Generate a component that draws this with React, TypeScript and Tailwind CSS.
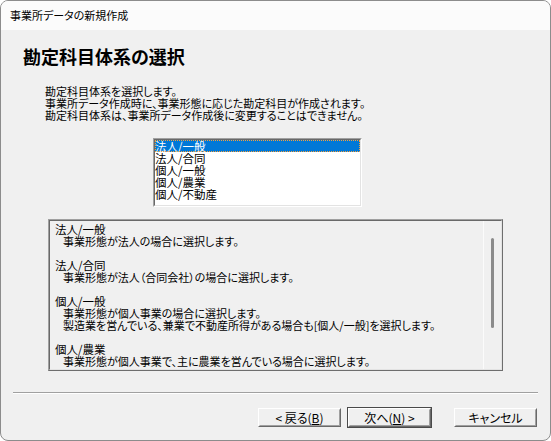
const items = ['法人/一般', '法人/合同', '個人/一般', '個人/農業', '個人/不動産'];

const help: { title: string; lines: string[] }[] = [
  { title: '法人/一般', lines: ['事業形態が法人の場合に選択します。'] },
  { title: '法人/合同', lines: ['事業形態が法人（合同会社）の場合に選択します。'] },
  {
    title: '個人/一般',
    lines: [
      '事業形態が個人事業の場合に選択します。',
      '製造業を営んでいる、兼業で不動産所得がある場合も[個人/一般]を選択します。',
    ],
  },
  { title: '個人/農業', lines: ['事業形態が個人事業で、主に農業を営んでいる場合に選択します。'] },
  { title: '個人/不動産', lines: ['事業形態が個人事業で、主に不動産賃貸業を営んでいる場合に選択します。'] },
];

const Button = ({ children, primary }: { children: React.ReactNode; primary?: boolean }) => (
  <div className={primary ? 'border border-[#4a4a4a]' : 'border border-transparent'}>
    <div className="border border-white border-r-[#696969] border-b-[#696969]">
      <div className="flex h-[17px] w-[81px] items-center justify-center border border-[#f0f0f0] border-r-[#a0a0a0] border-b-[#a0a0a0] bg-[#f0f0f0] text-[12px] leading-[12px] text-black">
        {children}
      </div>
    </div>
  </div>
);

export default function App() {
  return (
    <div className="h-[441px] w-[551px] overflow-hidden bg-white font-['Noto_Sans_CJK_JP',sans-serif] [font-feature-settings:'palt']">
      <div className="flex h-full flex-col overflow-hidden rounded-[8px] border border-[#8c8c8c] bg-[#f0f0f0]">
        <div className="flex h-[29px] shrink-0 items-center bg-[#fbfbfb] pl-[9px] text-[11px] text-black">
          事業所データの新規作成
        </div>

        <h1 className="ml-[22px] mt-[17px] text-[18px] font-bold leading-[18px] text-black">
          勘定科目体系の選択
        </h1>

        <div className="ml-[44px] mt-[20px] text-[11px] leading-[12px] text-black">
          <p>勘定科目体系を選択します。</p>
          <p>事業所データ作成時に、事業形態に応じた勘定科目が作成されます。</p>
          <p>勘定科目体系は、事業所データ作成後に変更することはできません。</p>
        </div>

        <div className="ml-[152px] mt-[17px] h-[69px] w-[209px] border border-[#a0a0a0] border-r-white border-b-white">
          <div className="h-full border border-[#696969] border-r-[#e3e3e3] border-b-[#e3e3e3] bg-white text-[11.5px] leading-[12px]">
            {items.map((it, i) => (
              <div
                key={it}
                className={
                  i === 0
                    ? 'h-[12px] bg-[#0078d7] text-white outline-1 outline-dotted -outline-offset-1 outline-[#f5a03c]'
                    : 'h-[12px] text-black'
                }
              >
                {it}
              </div>
            ))}
          </div>
        </div>

        <div className="ml-[47px] mt-[12px] h-[152px] w-[455px] border border-[#a0a0a0] border-r-[#6e6e6e] border-b-[#6e6e6e]">
          <div className="flex h-full border border-[#696969] border-r-[#e3e3e3] border-b-[#e3e3e3]">
            <div className="flex-1 overflow-hidden pl-[5px] pt-[2px] text-[11px] leading-[12px] text-black">
              {help.map((h) => (
                <div key={h.title} className="mb-[12px]">
                  <p className="text-[11.5px]">{h.title}</p>
                  {h.lines.map((l) => (
                    <p key={l} className="pl-[8px]">
                      {l}
                    </p>
                  ))}
                </div>
              ))}
            </div>
            <div className="w-[18px] shrink-0 border-l border-[#fbfbfb] pt-[17px]">
              <div className="mx-auto h-[90px] w-[3px] rounded-full bg-[#8b8b8b]" />
            </div>
          </div>
        </div>

        <div className="ml-[12px] mt-[21px] w-[525px] border-t border-b border-t-[#a0a0a0] border-b-white" />

        <div className="mr-[12px] mt-[13px] flex justify-end">
          <Button>
            &lt; 戻る(<span className="underline">B</span>)
          </Button>
          <div className="ml-[5px]">
            <Button primary>
              次へ(<span className="underline">N</span>) &gt;
            </Button>
          </div>
          <div className="ml-[21px]">
            <Button>キャンセル</Button>
          </div>
        </div>
      </div>
    </div>
  );
}
